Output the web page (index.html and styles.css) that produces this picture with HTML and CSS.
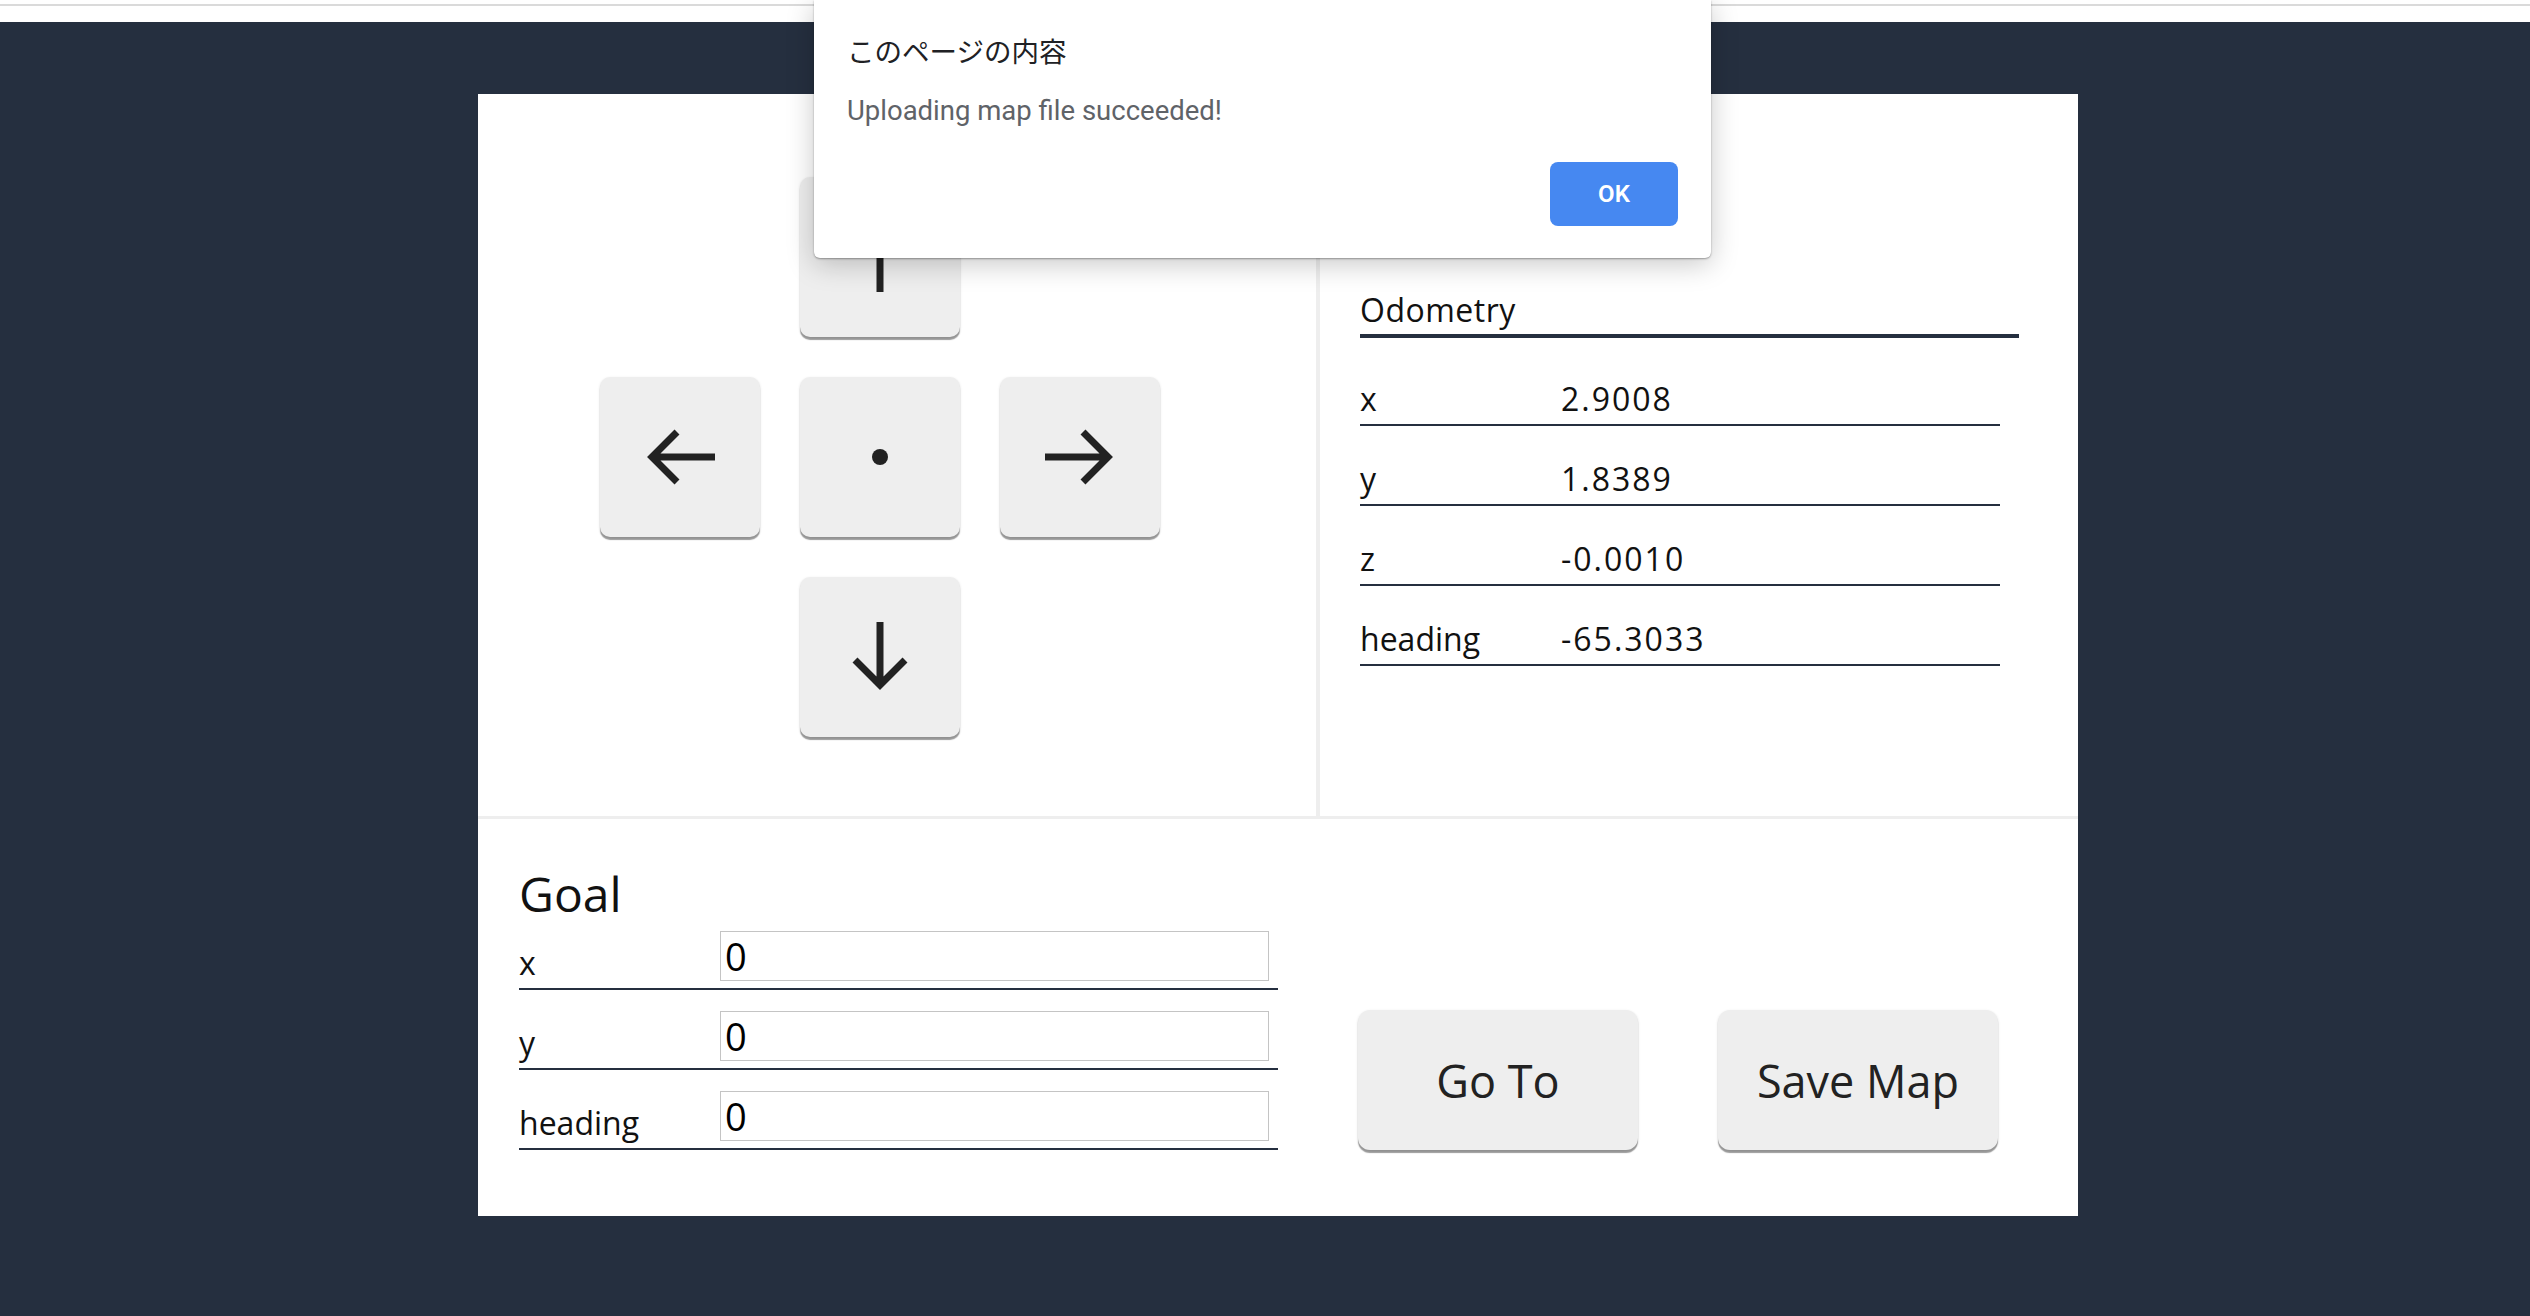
FILE: index.html
```html
<!DOCTYPE html>
<html lang="ja">
<head>
<meta charset="utf-8">
<title>Robot Control</title>
<link rel="stylesheet" href="styles.css">
</head>
<body>
<div class="topbar"></div>
<main class="panel">
  <section class="top">
    <div class="pad-cell">
      <div class="dpad">
        <span class="blank"></span>
        <button class="key" type="button" aria-label="up">
          <svg class="arrow-v" viewBox="0 0 56 70"><path d="M28 70V7M3 32L28 7L53 32"/></svg>
        </button>
        <span class="blank"></span>
        <button class="key" type="button" aria-label="left">
          <svg class="arrow-h" viewBox="0 0 70 56"><path d="M70 28H7M32 3L7 28L32 53"/></svg>
        </button>
        <button class="key" type="button" aria-label="stop"><span class="dot"></span></button>
        <button class="key" type="button" aria-label="right">
          <svg class="arrow-h" viewBox="0 0 70 56"><path d="M0 28H63M38 3L63 28L38 53"/></svg>
        </button>
        <span class="blank"></span>
        <button class="key" type="button" aria-label="down">
          <svg class="arrow-v" viewBox="0 0 56 70"><path d="M28 0V63M3 38L28 63L53 38"/></svg>
        </button>
        <span class="blank"></span>
      </div>
    </div>
    <div class="odo-cell">
      <h2 class="odo-title">Odometry</h2>
      <dl class="odo-list">
        <div class="odo-row"><dt>x</dt><dd>2.9008</dd></div>
        <div class="odo-row"><dt>y</dt><dd>1.8389</dd></div>
        <div class="odo-row"><dt>z</dt><dd>-0.0010</dd></div>
        <div class="odo-row"><dt>heading</dt><dd>-65.3033</dd></div>
      </dl>
    </div>
  </section>
  <section class="goal">
    <div class="goal-form">
      <h2 class="goal-title">Goal</h2>
      <label class="goal-row"><span class="goal-label">x</span><input class="goal-input" type="text" value="0"></label>
      <label class="goal-row"><span class="goal-label">y</span><input class="goal-input" type="text" value="0"></label>
      <label class="goal-row"><span class="goal-label">heading</span><input class="goal-input" type="text" value="0"></label>
    </div>
    <button class="action" type="button">Go To</button>
    <button class="action" type="button">Save Map</button>
  </section>
</main>
<div class="dialog" role="alertdialog">
  <p class="dialog-title">このページの内容</p>
  <p class="dialog-msg">Uploading map file succeeded!</p>
  <div class="dialog-actions"><button class="ok" type="button">OK</button></div>
</div>
</body>
</html>
```
FILE: styles.css
```css
html, body {
  margin: 0;
  padding: 0;
}
body {
  position: relative;
  min-height: 100vh;
  background: #252f3f;
  font-family: "Open Sans", "Noto Sans", sans-serif;
  color: #111;
}
.topbar {
  height: 22px;
  background: linear-gradient(#fff 0 4px, #dadada 4px 6px, #fff 6px);
}
.panel {
  width: 1600px;
  margin: 72px 0 0 478px;
  background: #fff;
}
.top {
  display: flex;
  height: 722px;
  border-bottom: 3px solid #eeeeee;
}
.pad-cell {
  width: 842px;
  box-sizing: border-box;
  border-right: 4px solid #eeeeee;
  padding: 83px 0 0 122px;
}
.dpad {
  display: grid;
  grid-template-columns: repeat(3, 160px);
  grid-template-rows: repeat(3, 160px);
  gap: 40px;
}
.key {
  width: 160px;
  height: 160px;
  padding: 0;
  border: 0;
  border-radius: 10px;
  background: #eeeeee;
  box-shadow: 0 3px 1px rgba(0, 0, 0, 0.38), 0 1px 3px rgba(0, 0, 0, 0.12);
  display: flex;
  align-items: center;
  justify-content: center;
}
.key svg {
  fill: none;
  stroke: #222;
  stroke-width: 7;
  stroke-linejoin: miter;
  overflow: visible;
}
.arrow-h {
  width: 70px;
  height: 56px;
}
.arrow-v {
  width: 56px;
  height: 70px;
}
.dot {
  width: 16px;
  height: 16px;
  border-radius: 50%;
  background: #222;
}
.odo-cell {
  flex: 1;
  padding: 196px 0 0 40px;
}
.odo-title {
  margin: 0;
  width: 659px;
  font-size: 32px;
  font-weight: 400;
  line-height: 40px;
  letter-spacing: 0.5px;
  padding-bottom: 4px;
  border-bottom: 4px solid #252f3f;
}
.odo-list {
  margin: 8px 0 0;
  width: 640px;
}
.odo-row {
  display: grid;
  grid-template-columns: 201px 1fr;
  padding: 33px 0 5px;
  font-size: 32px;
  line-height: 40px;
  border-bottom: 2px solid #252f3f;
}
.odo-row dt,
.odo-row dd {
  margin: 0;
}
.odo-row dd {
  letter-spacing: 2px;
}
.goal {
  display: flex;
  align-items: flex-end;
  padding: 47px 80px 66px 41px;
}
.goal-form {
  width: 759px;
  margin-right: 80px;
}
.goal-title {
  margin: 0 0 9px;
  font-size: 48px;
  font-weight: 400;
  line-height: 56px;
}
.goal-row {
  display: flex;
  align-items: flex-end;
  padding: 0 9px 7px 0;
  border-bottom: 2px solid #252f3f;
}
.goal-row + .goal-row {
  margin-top: 21px;
}
.goal-label {
  flex: none;
  width: 201px;
  font-size: 32px;
  line-height: 36px;
}
.goal-input {
  flex: 1;
  min-width: 0;
  height: 50px;
  box-sizing: border-box;
  border: 1px solid #c4c4c4;
  border-radius: 0;
  padding: 0 4px;
  font-family: "Open Sans", sans-serif;
  font-size: 38px;
  color: #000;
  background: #fff;
  outline: none;
}
.action {
  flex: none;
  width: 280px;
  height: 140px;
  padding: 0;
  border: 0;
  border-radius: 12px;
  background: #eeeeee;
  box-shadow: 0 3px 1px rgba(0, 0, 0, 0.38), 0 1px 3px rgba(0, 0, 0, 0.12);
  font-family: "Open Sans", sans-serif;
  font-size: 45px;
  color: #222;
}
.action + .action {
  margin-left: 80px;
}
.dialog {
  position: absolute;
  left: 814px;
  top: 0;
  width: 897px;
  height: 258px;
  box-sizing: border-box;
  padding: 32px 33px 32px 33px;
  background: #fff;
  border-radius: 0 0 6px 6px;
  box-shadow: 0 1px 2px rgba(0, 0, 0, 0.35), 0 6px 28px rgba(0, 0, 0, 0.22);
  display: flex;
  flex-direction: column;
}
.dialog-title {
  margin: 0;
  font-family: "Noto Sans CJK JP", sans-serif;
  font-size: 27.5px;
  line-height: 36px;
  color: #202124;
}
.dialog-msg {
  margin: 27px 0 0;
  font-family: Roboto, "Liberation Sans", sans-serif;
  font-size: 27.5px;
  line-height: 32px;
  color: #5f6368;
}
.dialog-actions {
  margin-top: auto;
  display: flex;
  justify-content: flex-end;
}
.ok {
  width: 128px;
  height: 64px;
  border: 0;
  border-radius: 8px;
  background: #4688f1;
  color: #fff;
  font-family: Roboto, "Liberation Sans", sans-serif;
  font-size: 24px;
  font-weight: 600;
}
```
